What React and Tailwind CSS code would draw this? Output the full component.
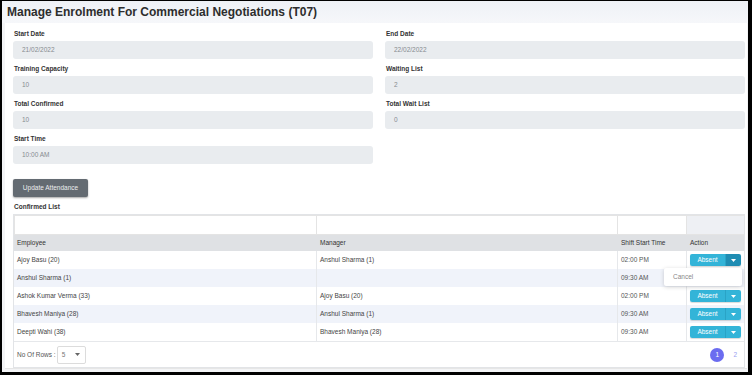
import React from "react";

const font = { fontFamily: '"Liberation Sans", Arial, sans-serif' };

function Field({ label, value }) {
  return (
    <div className="mb-[5px]">
      <div className="h-[10px] leading-[10px] pl-[1px] text-[6.5px] font-bold text-[#333]">{label}</div>
      <div className="mt-[2px] h-[18px] rounded-[3px] bg-[#e9ecef] flex items-center pl-[9px] text-[6.5px] text-[#868b90]">
        {value}
      </div>
    </div>
  );
}

function Caret({ className = "" }) {
  return (
    <svg width="5" height="3" viewBox="0 0 5 3" className={className}>
      <path d="M0 0 L5 0 L2.5 3 Z" fill="currentColor" />
    </svg>
  );
}

function AbsentBtn({ active }) {
  return (
    <div className="flex h-[12px] w-[51px] rounded-[2px] overflow-hidden shadow-[0_1px_1px_rgba(0,0,0,0.15)]">
      <div className="w-[35px] bg-[#33b4d8] text-white text-[6.5px] flex items-center justify-center">Absent</div>
      <div className={"flex-1 flex items-center justify-center text-white border-l border-[#2aa3c6] " + (active ? "bg-[#1f8db3]" : "bg-[#33b4d8]")}>
        <Caret />
      </div>
    </div>
  );
}

const rows = [
  { e: "Ajoy Basu (20)", m: "Anshul Sharma (1)", t: "02:00 PM", active: true },
  { e: "Anshul Sharma (1)", m: "", t: "09:30 AM" },
  { e: "Ashok Kumar Verma (33)", m: "Ajoy Basu (20)", t: "02:00 PM" },
  { e: "Bhavesh Maniya (28)", m: "Anshul Sharma (1)", t: "09:30 AM" },
  { e: "Deepti Wahi (38)", m: "Bhavesh Maniya (28)", t: "09:30 AM" },
];

const cols = "grid grid-cols-[303px_301px_69px_1fr]";

export default function App() {
  return (
    <div style={font} className="w-[752px] h-[375px] bg-black pt-px pl-[2px] pr-[4px] pb-[3px]">
      <div className="h-full bg-[#f3f4f6] flex flex-col overflow-hidden">
        <div className="h-[22px] shrink-0 bg-gradient-to-b from-[#eef1f6] to-[#f6f7fa] flex items-center pl-[5px] text-[12px] font-bold text-[#2d2d2d]">
          Manage Enrolment For Commercial Negotiations (T07)
        </div>
        <div className="flex-1 ml-[3px] mr-[1px] mb-[3px] bg-white pt-[6px] pl-[8px] pr-[2px] border-b border-[#e6e6e6]">
          <div className="grid grid-cols-2 gap-x-[12px]">
            <Field label="Start Date" value="21/02/2022" />
            <Field label="End Date" value="22/02/2022" />
            <Field label="Training Capacity" value="10" />
            <Field label="Waiting List" value="2" />
            <Field label="Total Confirmed" value="10" />
            <Field label="Total Wait List" value="0" />
            <Field label="Start Time" value="10:00 AM" />
          </div>
          <div className="mt-[10px] h-[18px] w-[75px] rounded-[2px] bg-[#646b72] text-[#eceeef] text-[6.5px] flex items-center justify-center shadow-[0_1px_2px_rgba(0,0,0,0.35)]">
            Update Attendance
          </div>
          <div className="mt-[5px] h-[10px] leading-[10px] pl-[1px] text-[6.5px] font-bold text-[#333]">Confirmed List</div>
          <div className="mt-[2px] border border-[#e2e4e7] relative">
            <div className={cols + " h-[20px]"}>
              <div className="border border-[#e4e4e4] bg-white" />
              <div className="border border-[#e4e4e4] border-l-0 bg-white" />
              <div className="border border-[#e4e4e4] border-l-0 bg-white" />
              <div className="bg-[#eef0f4] border-y border-[#e4e4e4]" />
            </div>
            <div className={cols + " h-[16px] bg-[#dfe1e4] text-[6.5px] text-[#333] items-center"}>
              <div className="pl-[3px]">Employee</div>
              <div className="pl-[3px]">Manager</div>
              <div className="pl-[3px]">Shift Start Time</div>
              <div className="pl-[3px]">Action</div>
            </div>
            {rows.map((r, i) => (
              <div key={i} className={cols + " h-[18px] text-[6.5px] text-[#444] " + (i % 2 === 1 ? "bg-[#f0f3fa]" : "bg-white")}>
                <div className="pl-[3px] flex items-center border-r border-[#e6e8eb]">{r.e}</div>
                <div className="pl-[3px] flex items-center border-r border-[#e6e8eb]">{r.m}</div>
                <div className="pl-[3px] flex items-center border-r border-[#e6e8eb] text-[#555]">{r.t}</div>
                <div className="pl-[3px] flex items-center">
                  <AbsentBtn active={r.active} />
                </div>
              </div>
            ))}
            <div className="h-[26px] border-t border-[#e6e8eb] flex items-center pl-[3px] pr-[7px] text-[6.5px] text-[#555]">
              <span>No Of Rows :</span>
              <div className="ml-[1px] w-[29px] h-[18px] border border-[#dcdcdc] rounded-[2px] flex items-center pl-[4px] pr-[5px] justify-between">
                <span className="text-[#777]">5</span>
                <Caret className="text-[#666]" />
              </div>
              <div className="ml-auto flex items-center gap-[9px]">
                <div className="w-[14px] h-[14px] rounded-full bg-[#6b6cf0] text-white flex items-center justify-center">1</div>
                <div className="text-[#9aa0f0]">2</div>
              </div>
            </div>
            <div className="absolute left-[650px] top-[53px] w-[78px] h-[18px] bg-white rounded-[2px] shadow-[0_1px_4px_rgba(0,0,0,0.18)] flex items-center pl-[9px] text-[6.5px] text-[#888]">
              Cancel
            </div>
          </div>
        </div>
      </div>
    </div>
  );
}
